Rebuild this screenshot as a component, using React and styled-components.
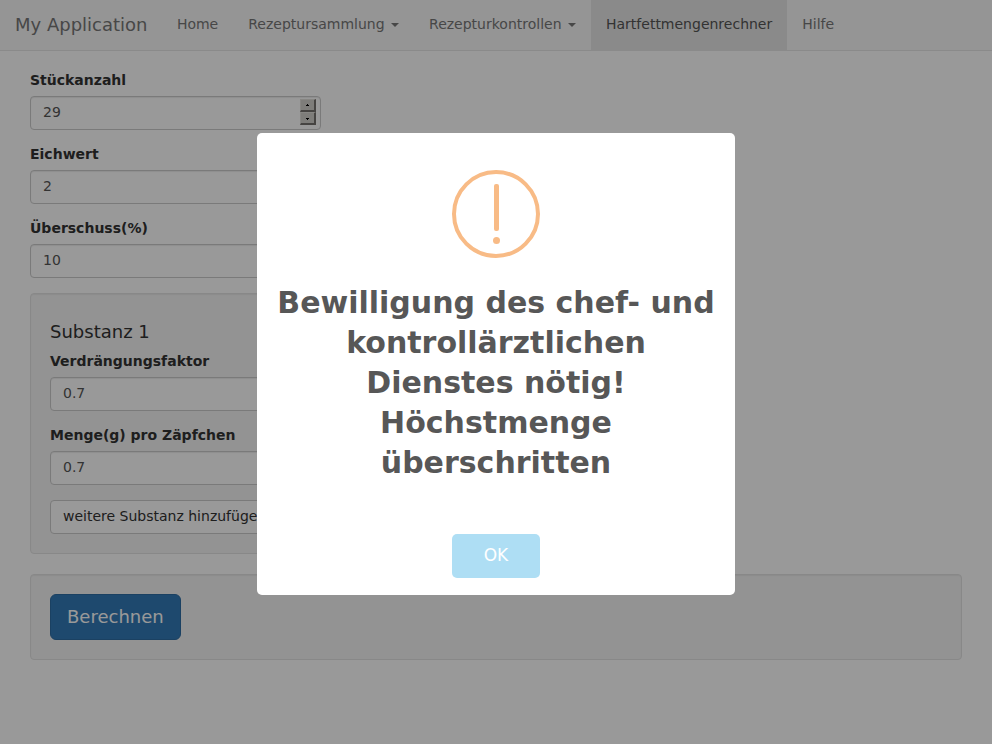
import React from "react";
import styled, { createGlobalStyle } from "styled-components";

const GlobalStyle = createGlobalStyle`
  *, *::before, *::after { box-sizing: border-box; }
  body {
    margin: 0;
    background: #fff;
    color: #333;
    font: 14px/20px "DejaVu Sans", sans-serif;
    overflow: hidden;
  }
`;

const Navbar = styled.nav`
  display: flex;
  height: 51px;
  margin-bottom: 20px;
  background: #f8f8f8;
  border-bottom: 1px solid #e7e7e7;
`;

const Brand = styled.a`
  padding: 15px;
  margin-right: -0.6px;
  font-size: 18px;
  color: #777;
  white-space: nowrap;
`;

const NavItem = styled.a`
  padding: 14px 15px 16px;
  white-space: nowrap;
  color: ${(p) => (p.$active ? "#555" : "#777")};
  background: ${(p) => (p.$active ? "#e7e7e7" : "transparent")};
`;

const Caret = styled.b`
  display: inline-block;
  margin-left: 2px;
  vertical-align: middle;
  border-top: 4px solid;
  border-left: 4px solid transparent;
  border-right: 4px solid transparent;
`;

const Content = styled.main`
  padding: 0 30px;
`;

const Column = styled.div`
  width: 290.67px;
`;

const Group = styled.div`
  margin-bottom: 15px;
`;

const Label = styled.label`
  display: block;
  margin-bottom: 7px;
  font-weight: 700;
  line-height: 18px;
`;

const Field = styled.div`
  display: flex;
  justify-content: space-between;
  height: 34px;
  padding: 2px 4px 4px 12px;
  line-height: 26px;
  color: #555;
  background: #fff;
  border: 1px solid #ccc;
  border-radius: 4px;
  box-shadow: inset 0 1px 1px rgba(0, 0, 0, 0.075);
`;

const Spinner = styled.span`
  display: grid;
  grid-template-rows: 13px 13px;
  width: 16px;
`;

const SpinButton = styled.span`
  display: grid;
  place-items: center;
  padding-top: ${(p) => (p.$down ? "2px" : "0")};
  background: #d3d0cc;
  border: solid;
  border-width: 1px 2px 2px 1px;
  border-color: #e2dfdb #75726e #75726e #e2dfdb;
`;

const Arrow = styled.svg`
  display: block;
  width: 3px;
  height: 2px;
  transform: ${(p) => (p.$down ? "rotate(180deg)" : "none")};
`;

const Well = styled.section`
  min-height: 20px;
  margin-bottom: 20px;
  padding: 19px;
  background: #f5f5f5;
  border: 1px solid #e3e3e3;
  border-radius: 4px;
  box-shadow: inset 0 1px 1px rgba(0, 0, 0, 0.05);
`;

const WellTitle = styled.h4`
  margin: 10px 0 12px;
  font-size: 18px;
  font-weight: 500;
  line-height: 17px;
`;

const AddButton = styled.button`
  display: block;
  height: 34px;
  padding: 0 12px 2px;
  font: inherit;
  color: #333;
  white-space: nowrap;
  background: #fff;
  border: 1px solid #ccc;
  border-radius: 4px;
`;

const PrimaryButton = styled.button`
  display: block;
  height: 46px;
  padding: 0 16px;
  font: inherit;
  font-size: 18px;
  color: #fff;
  background: #337ab7;
  border: 1px solid #2e6da4;
  border-radius: 6px;
`;

const Overlay = styled.div`
  position: fixed;
  inset: 0;
  display: flex;
  justify-content: center;
  align-items: flex-start;
  padding-top: 133px;
  background: rgba(0, 0, 0, 0.4);
`;

const Dialog = styled.div`
  display: flex;
  flex-direction: column;
  align-items: center;
  width: 478px;
  height: 462px;
  padding: 37px 17px 17px;
  background: #fff;
  border-radius: 5px;
`;

const WarningIcon = styled.div`
  display: flex;
  flex-direction: column;
  align-items: center;
  flex: none;
  width: 88px;
  height: 88px;
  padding-top: 10px;
  border: 4px solid #f8bb86;
  border-radius: 50%;
`;

const WarningBar = styled.span`
  width: 5px;
  height: 47px;
  margin-left: 1px;
  border-radius: 2px;
  background: #f8bb86;
`;

const WarningDot = styled.span`
  width: 7px;
  height: 7px;
  margin: 6px 0 0 1px;
  border-radius: 50%;
  background: #f8bb86;
`;

const DialogTitle = styled.h2`
  margin: 25px 0 0;
  font-size: 30px;
  font-weight: 600;
  line-height: 40px;
  text-align: center;
  color: #575757;
`;

const ConfirmButton = styled.button`
  width: 88px;
  height: 44px;
  margin-top: auto;
  padding: 0 0 2px;
  font: 500 17px "DejaVu Sans", sans-serif;
  color: #fff;
  background: #aedef4;
  border: 0;
  border-radius: 5px;
`;

const NAV = [
  { text: "Home" },
  { text: "Rezeptursammlung", menu: true },
  { text: "Rezepturkontrollen", menu: true },
  { text: "Hartfettmengenrechner", active: true },
  { text: "Hilfe" },
];

function SpinArrow({ down }) {
  return (
    <Arrow $down={down} viewBox="0 0 3 2" shapeRendering="crispEdges">
      <path d="M1 0h1v1h1v1H0V1h1z" fill="#000" />
    </Arrow>
  );
}

function NumberField({ label, value, spinner }) {
  return (
    <Group>
      <Label>{label}</Label>
      <Field>
        <span>{value}</span>
        {spinner && (
          <Spinner>
            <SpinButton><SpinArrow /></SpinButton>
            <SpinButton $down><SpinArrow down /></SpinButton>
          </Spinner>
        )}
      </Field>
    </Group>
  );
}

export default function App() {
  return (
    <>
      <GlobalStyle />
      <Navbar>
        <Brand>My Application</Brand>
        {NAV.map((item) => (
          <NavItem key={item.text} $active={item.active}>
            {item.text}
            {item.menu && <> <Caret /></>}
          </NavItem>
        ))}
      </Navbar>
      <Content>
        <Column>
          <NumberField label="Stückanzahl" value="29" spinner />
          <NumberField label="Eichwert" value="2" />
          <NumberField label="Überschuss(%)" value="10" />
          <Well>
            <WellTitle>Substanz 1</WellTitle>
            <NumberField label="Verdrängungsfaktor" value="0.7" />
            <NumberField label="Menge(g) pro Zäpfchen" value="0.7" />
            <AddButton>weitere Substanz hinzufügen</AddButton>
          </Well>
        </Column>
        <Well>
          <PrimaryButton>Berechnen</PrimaryButton>
        </Well>
      </Content>
      <Overlay>
        <Dialog role="alertdialog">
          <WarningIcon>
            <WarningBar />
            <WarningDot />
          </WarningIcon>
          <DialogTitle>
            Bewilligung des chef- und kontrollärztlichen Dienstes nötig! Höchstmenge überschritten
          </DialogTitle>
          <ConfirmButton>OK</ConfirmButton>
        </Dialog>
      </Overlay>
    </>
  );
}
